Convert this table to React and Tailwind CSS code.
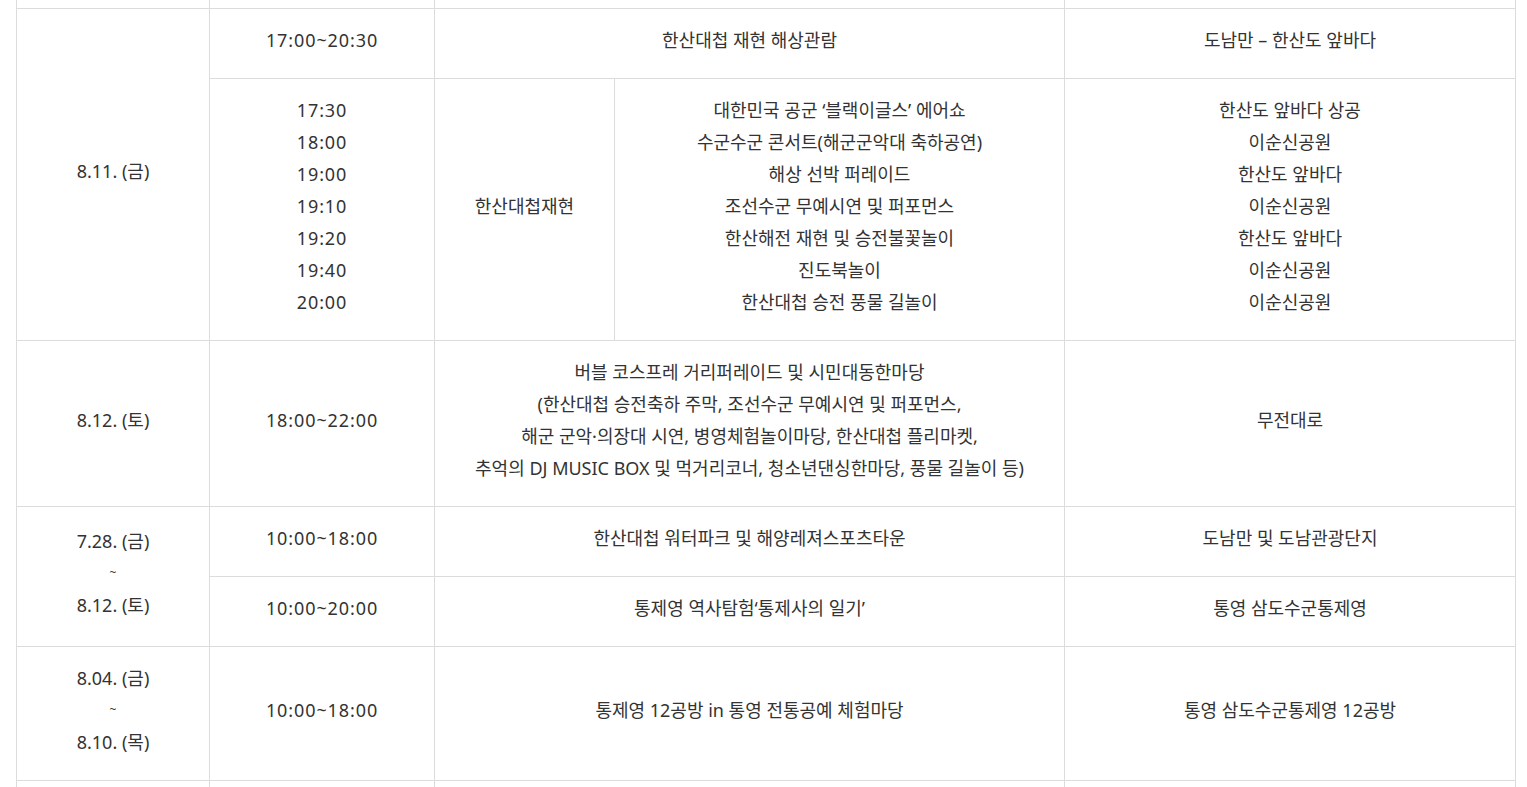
import React from 'react';

const line = 'border border-[#dcdcdc]';
const cell = `${line} text-center align-middle p-0 pb-[7px]`;
const num = `${cell} tracking-[0.9px]`;

const showRows = [
  ['17:30', '대한민국 공군 ‘블랙이글스’ 에어쇼', '한산도 앞바다 상공'],
  ['18:00', '수군수군 콘서트(해군군악대 축하공연)', '이순신공원'],
  ['19:00', '해상 선박 퍼레이드', '한산도 앞바다'],
  ['19:10', '조선수군 무예시연 및 퍼포먼스', '이순신공원'],
  ['19:20', '한산해전 재현 및 승전불꽃놀이', '한산도 앞바다'],
  ['19:40', '진도북놀이', '이순신공원'],
  ['20:00', '한산대첩 승전 풍물 길놀이', '이순신공원']
];

function Lines({ items }) {
  return (
    <>
      {items.map((t, i) => (
        <div key={i}>{t}</div>
      ))}
    </>
  );
}

export default function App() {
  return (
    <div
      className="w-[1527px] h-[787px] overflow-hidden bg-white text-[#333] text-[18px] leading-[32px]"
      style={{ fontFamily: '"Noto Sans", "Noto Sans CJK KR", sans-serif' }}
    >
      <table className="border-collapse table-fixed w-[1499px] ml-[16px] -mt-[1px]">
        <colgroup>
          <col className="w-[193px]" />
          <col className="w-[225px]" />
          <col className="w-[180px]" />
          <col className="w-[450px]" />
          <col className="w-[451px]" />
        </colgroup>
        <tbody>
          {/* 잘린 윗줄 */}
          <tr className="h-[9px]">
            <td className={`${line} p-0`}></td>
            <td className={`${line} p-0`}></td>
            <td className={`${line} p-0`} colSpan={2}></td>
            <td className={`${line} p-0`}></td>
          </tr>

          <tr className="h-[70px]">
            <td className={cell} rowSpan={2}>8.11. (금)</td>
            <td className={num}>17:00~20:30</td>
            <td className={cell} colSpan={2}>한산대첩 재현 해상관람</td>
            <td className={cell}>도남만 – 한산도 앞바다</td>
          </tr>
          <tr className="h-[262px]">
            <td className={num}>
              <Lines items={showRows.map((r) => r[0])} />
            </td>
            <td className={cell}>한산대첩재현</td>
            <td className={cell}>
              <Lines items={showRows.map((r) => r[1])} />
            </td>
            <td className={cell}>
              <Lines items={showRows.map((r) => r[2])} />
            </td>
          </tr>

          <tr className="h-[166px]">
            <td className={cell}>8.12. (토)</td>
            <td className={num}>18:00~22:00</td>
            <td className={cell} colSpan={2}>
              <Lines
                items={[
                  '버블 코스프레 거리퍼레이드 및 시민대동한마당',
                  '(한산대첩 승전축하 주막, 조선수군 무예시연 및 퍼포먼스,',
                  '해군 군악·의장대 시연, 병영체험놀이마당, 한산대첩 플리마켓,',
                  '추억의 DJ MUSIC BOX 및 먹거리코너, 청소년댄싱한마당, 풍물 길놀이 등)'
                ]}
              />
            </td>
            <td className={cell}>무전대로</td>
          </tr>

          <tr className="h-[70px]">
            <td className={cell} rowSpan={2}>
              <div>7.28. (금)</div>
              <div className="text-[12px]">~</div>
              <div>8.12. (토)</div>
            </td>
            <td className={num}>10:00~18:00</td>
            <td className={cell} colSpan={2}>한산대첩 워터파크 및 해양레져스포츠타운</td>
            <td className={cell}>도남만 및 도남관광단지</td>
          </tr>
          <tr className="h-[70px]">
            <td className={num}>10:00~20:00</td>
            <td className={cell} colSpan={2}>통제영 역사탐험‘통제사의 일기’</td>
            <td className={cell}>통영 삼도수군통제영</td>
          </tr>

          <tr className="h-[134px]">
            <td className={cell}>
              <div>8.04. (금)</div>
              <div className="text-[12px]">~</div>
              <div>8.10. (목)</div>
            </td>
            <td className={num}>10:00~18:00</td>
            <td className={cell} colSpan={2}>통제영 12공방 in 통영 전통공예 체험마당</td>
            <td className={cell}>통영 삼도수군통제영 12공방</td>
          </tr>

          <tr className="h-[40px]">
            <td className={`${line} p-0`}></td>
            <td className={`${line} p-0`}></td>
            <td className={`${line} p-0`} colSpan={2}></td>
            <td className={`${line} p-0`}></td>
          </tr>
        </tbody>
      </table>
    </div>
  );
}
